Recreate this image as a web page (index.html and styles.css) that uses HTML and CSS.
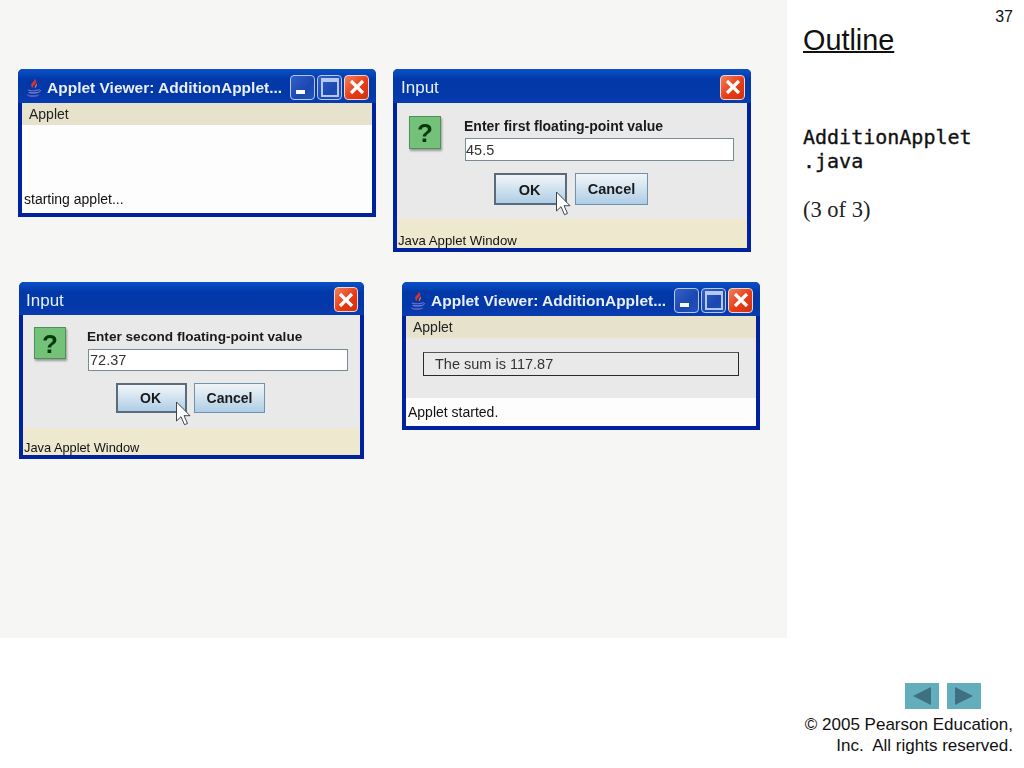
FILE: index.html
```html
<!DOCTYPE html>
<html lang="en">
<head>
<meta charset="utf-8">
<title>AdditionApplet.java (3 of 3)</title>
<link rel="stylesheet" href="styles.css">
</head>
<body>
<svg class="defs" width="0" height="0" aria-hidden="true">
  <symbol id="java" viewBox="0 0 18 20">
    <path d="M10 0c1.500 3-4 4-3.500 7.500.2 1.200 1 2.300 1.700 3C7.500 8 11 6 12 4 12.500 3 11 1 10 0z" fill="#d8342a"/>
    <path d="M12.500 5c-1 2-3 3-2 5l.6.800c-.2-1.800 2.600-3 1.400-5.800z" fill="#e8685a"/>
    <path d="M3 11.500c3 1 8 1 11 0v1.300c-3 1-8 1-11 0z" fill="#6a6cc8"/>
    <path d="M4 14c2.500.8 7 .8 9.500 0v1.200c-2.500.8-7 .8-9.500 0z" fill="#8486d8"/>
    <path d="M2 16.500c3 1.200 10 1.200 13 0 .5 1.800-3.500 3-6.500 3s-7-1.200-6.500-3z" fill="#5a58b8"/>
    <path d="M14 12c2-.6 3.200.8 1.500 2l-2 .8" fill="none" stroke="#8486d8"/>
  </symbol>
  <symbol id="cursor" viewBox="0 0 16 26">
    <path d="M1.500 1v19l4.500-4.300 3.500 8 3-1.300-3.500-7.700h6z" fill="#fff" stroke="#3c4650" stroke-width="1"/>
  </symbol>
</svg>

<div class="slide">
  <main class="stage">

    <section class="window win-a">
      <header class="titlebar">
        <svg class="java"><use href="#java"/></svg>
        <span class="title">Applet Viewer: AdditionApplet...</span>
        <span class="controls">
          <span class="ctl ctl-min"></span>
          <span class="ctl ctl-max"></span>
          <span class="ctl ctl-close">
            <svg viewBox="0 0 24 24"><path d="M6 6l12 12M18 6L6 18" stroke="#fff" stroke-width="3.200"/></svg>
          </span>
        </span>
      </header>
      <div class="frame">
        <div class="menu">Applet</div>
        <div class="client white"></div>
        <div class="status white">starting applet...</div>
      </div>
    </section>

    <section class="window win-b">
      <header class="titlebar">
        <span class="title plain">Input</span>
        <span class="controls">
          <span class="ctl ctl-close ctl-big">
            <svg viewBox="0 0 24 24"><path d="M6 6l12 12M18 6L6 18" stroke="#fff" stroke-width="3.200"/></svg>
          </span>
        </span>
      </header>
      <div class="frame dialog">
        <div class="prompt">
          <span class="help">?</span>
          <div class="fields">
            <label class="prompt-label">Enter first floating-point value</label>
            <div class="input">45.5</div>
          </div>
        </div>
        <div class="buttons">
          <span class="btn btn-default">OK<svg class="cursor"><use href="#cursor"/></svg></span>
          <span class="btn">Cancel</span>
        </div>
        <div class="foot">Java Applet Window</div>
      </div>
    </section>

    <section class="window win-c">
      <header class="titlebar">
        <span class="title plain">Input</span>
        <span class="controls">
          <span class="ctl ctl-close ctl-big">
            <svg viewBox="0 0 24 24"><path d="M6 6l12 12M18 6L6 18" stroke="#fff" stroke-width="3.200"/></svg>
          </span>
        </span>
      </header>
      <div class="frame dialog">
        <div class="prompt">
          <span class="help">?</span>
          <div class="fields">
            <label class="prompt-label">Enter second floating-point value</label>
            <div class="input">72.37</div>
          </div>
        </div>
        <div class="buttons">
          <span class="btn btn-default">OK<svg class="cursor"><use href="#cursor"/></svg></span>
          <span class="btn">Cancel</span>
        </div>
        <div class="foot">Java Applet Window</div>
      </div>
    </section>

    <section class="window win-d">
      <header class="titlebar">
        <svg class="java"><use href="#java"/></svg>
        <span class="title">Applet Viewer: AdditionApplet...</span>
        <span class="controls">
          <span class="ctl ctl-min"></span>
          <span class="ctl ctl-max"></span>
          <span class="ctl ctl-close">
            <svg viewBox="0 0 24 24"><path d="M6 6l12 12M18 6L6 18" stroke="#fff" stroke-width="3.200"/></svg>
          </span>
        </span>
      </header>
      <div class="frame">
        <div class="menu">Applet</div>
        <div class="client grey"><div class="sum">The sum is 117.87</div></div>
        <div class="status white">Applet started.</div>
      </div>
    </section>

  </main>

  <aside class="side">
    <div class="page-no">37</div>
    <h1 class="outline">Outline</h1>
    <div class="file">AdditionApplet<br>.java</div>
    <div class="part">(3 of 3)</div>
    <div class="side-foot">
      <nav class="nav">
        <span class="nav-btn"><svg viewBox="0 0 34 26"><path d="M26 4v18L8 13z" fill="#3f6f80"/></svg></span>
        <span class="nav-btn"><svg viewBox="0 0 34 26"><path d="M8 4v18l18-9z" fill="#3f6f80"/></svg></span>
      </nav>
      <p class="copy">© 2005 Pearson Education,<br>Inc.&nbsp; All rights reserved.</p>
    </div>
  </aside>
</div>
</body>
</html>
```

FILE: styles.css
```css
* { box-sizing: border-box; }
html, body { margin: 0; padding: 0; background: #fff; }
body { width: 1024px; height: 768px; overflow: hidden; font-family: "Liberation Sans", Arial, sans-serif; color: #111; }
.defs { position: absolute; }

.slide { display: flex; width: 1024px; height: 768px; }
.stage { position: relative; flex: none; width: 787px; height: 638px; background: #f6f6f4; }

/* Windows sit on a free canvas */
.window {
  position: absolute;
  display: flex;
  flex-direction: column;
  background: #00229e;
  border-radius: 5px 5px 0 0;
  overflow: hidden;
  filter: blur(.4px);
}
.win-a { left: 18px; top: 69px; width: 358px; height: 148px; }
.win-b { left: 393px; top: 69px; width: 358px; height: 183px; }
.win-c { left: 19px; top: 282px; width: 345px; height: 177px; }
.win-d { left: 402px; top: 282px; width: 358px; height: 148px; }

.titlebar {
  flex: none;
  height: 34px;
  display: flex;
  align-items: center;
  padding: 4px 7px 0 7px;
  background: linear-gradient(#0a50c8 0, #0848bc 12%, #0238a8 30%, #0238a8 70%, #0a3cb0 100%);
}
.java { width: 17px; height: 20px; margin-right: 5px; flex: none; }
.title { font-size: 15.500px; font-weight: bold; color: #e8eefa; white-space: nowrap; }
.title.plain { font-weight: normal; font-size: 17px; padding-left: 1px; }
.controls { margin-left: auto; margin-bottom: 2px; display: flex; gap: 2px; }
.ctl {
  position: relative;
  width: 25px;
  height: 25px;
  border: 1px solid #b4c8f0;
  border-radius: 4px;
  background: linear-gradient(135deg, #3260c8, #1a48b0 60%, #2452bc);
  display: flex;
  align-items: center;
  justify-content: center;
}
.ctl-min::after { content: ""; width: 9px; height: 4px; background: #f4f8ff; margin: 10px 5px 0 0; }
.ctl-max::after { content: ""; width: 14px; height: 13px; border: 2px solid #b4c8f0; border-top-width: 4px; }
.ctl-close { background: linear-gradient(135deg, #f0805c, #e83c14 55%, #d03010); border-color: #e8d8d0; }
.ctl-close svg { width: 24px; height: 24px; flex: none; }

.frame {
  flex: 1;
  min-height: 0;
  display: flex;
  flex-direction: column;
  margin: 0 4px 4px;
  font-size: 14px;
}
.menu { flex: none; height: 22px; line-height: 22px; padding-left: 7px; background: #e6e2cc; color: #222; }
.client { flex: 1; }
.white { background: #fdfdfd; }
.grey { background: #e9e9e9; display: flex; flex-direction: column; padding: 14px 17px 0 17px; }
.status { flex: none; height: 28px; line-height: 29px; padding-left: 2px; }
.sum {
  height: 24px;
  line-height: 23px;
  padding-left: 11px;
  border: 1px solid #2a2a2a;
  border-top-color: #555;
  color: #333;
  font-size: 14.500px;
}

.dialog { background: #e9e9ea; }
.prompt { flex: none; display: flex; padding: 13px 13px 0 12px; }
.help {
  flex: none;
  width: 32px;
  height: 33px;
  margin-right: 23px;
  background: #74c27a;
  border: 1px solid #4f8f58;
  box-shadow: 1px 2px 2px #9a9a9a;
  color: #063a0c;
  font-size: 26px;
  font-weight: bold;
  line-height: 32px;
  text-align: center;
}
.fields { flex: 1; display: flex; flex-direction: column; gap: 4px; padding-top: 2px; }
.prompt-label { font-size: 14px; font-weight: bold; line-height: 16px; color: #1a1a1a; white-space: nowrap; }
.input {
  height: 23px;
  line-height: 22px;
  margin-left: 1px;
  background: #fff;
  border: 1px solid #7c8a94;
  color: #333;
  font-size: 14.500px;
}
.buttons { flex: none; display: flex; gap: 8px; padding-top: 12px; }
.btn {
  position: relative;
  width: 73px;
  height: 32px;
  line-height: 31px;
  text-align: center;
  font-weight: bold;
  font-size: 14.500px;
  color: #1a1a1a;
  background: linear-gradient(#f0f4f8, #dbe8f2 35%, #aecde6);
  border: 1px solid #6f93ad;
}
.btn-default { border: 2px solid #5a6c7c; line-height: 30px; padding-right: 2px; }
.cursor { position: absolute; left: 59px; top: 16px; width: 16px; height: 26px; }
.foot { margin-top: auto; flex: none; height: 29px; line-height: 44px; padding-left: 1px; background: #eee8cf; font-size: 13.200px; white-space: nowrap; overflow: hidden; }

.win-b .titlebar { padding-right: 6px; }
.win-b .buttons { padding-left: 97px; }
.win-c .titlebar { height: 33px; padding-left: 6px; padding-right: 6px; }
.win-c .ctl { width: 24px; }
.win-c .buttons { padding-left: 93px; gap: 7px; }
.win-c .btn { width: 71px; height: 30px; font-size: 14px; line-height: 28px; }
.win-c .btn-default { line-height: 27px; }
.win-c .prompt { padding: 12px 12px 0 11px; }
.win-c .help { height: 32px; margin-right: 21px; }
.win-c .prompt-label { font-size: 13.600px; }
.win-c .input { height: 22px; line-height: 21px; padding-left: 1px; }
.win-c .cursor { left: 57px; }
.win-c .foot { height: 27px; line-height: 40px; font-size: 12.800px; }

/* Right column */
.side { flex: 1; display: flex; flex-direction: column; padding: 8px 11px 12px 16px; }
.page-no { text-align: right; font-size: 16px; line-height: 17px; height: 17px; }
.outline { margin: 0; font-size: 28.800px; font-weight: normal; line-height: 30px; height: 30px; text-decoration: underline; text-decoration-thickness: 2px; color: #111; }
.file { margin-top: 70px; font-family: "DejaVu Sans Mono", monospace; font-size: 20px; line-height: 24px; -webkit-text-stroke: .35px #111; }
.part { margin-top: 24px; font-family: "Liberation Serif", serif; font-size: 22.500px; line-height: 26px; color: #222; }
.side-foot { margin-top: auto; display: flex; flex-direction: column; }
.nav { display: flex; gap: 8px; margin-left: 102px; }
.nav-btn { width: 34px; height: 26px; background: #62aebd; display: flex; }
.nav-btn svg { width: 34px; height: 26px; }
.copy { margin: 5px 0 0; font-size: 17px; line-height: 21px; text-align: right; white-space: nowrap; }
```
